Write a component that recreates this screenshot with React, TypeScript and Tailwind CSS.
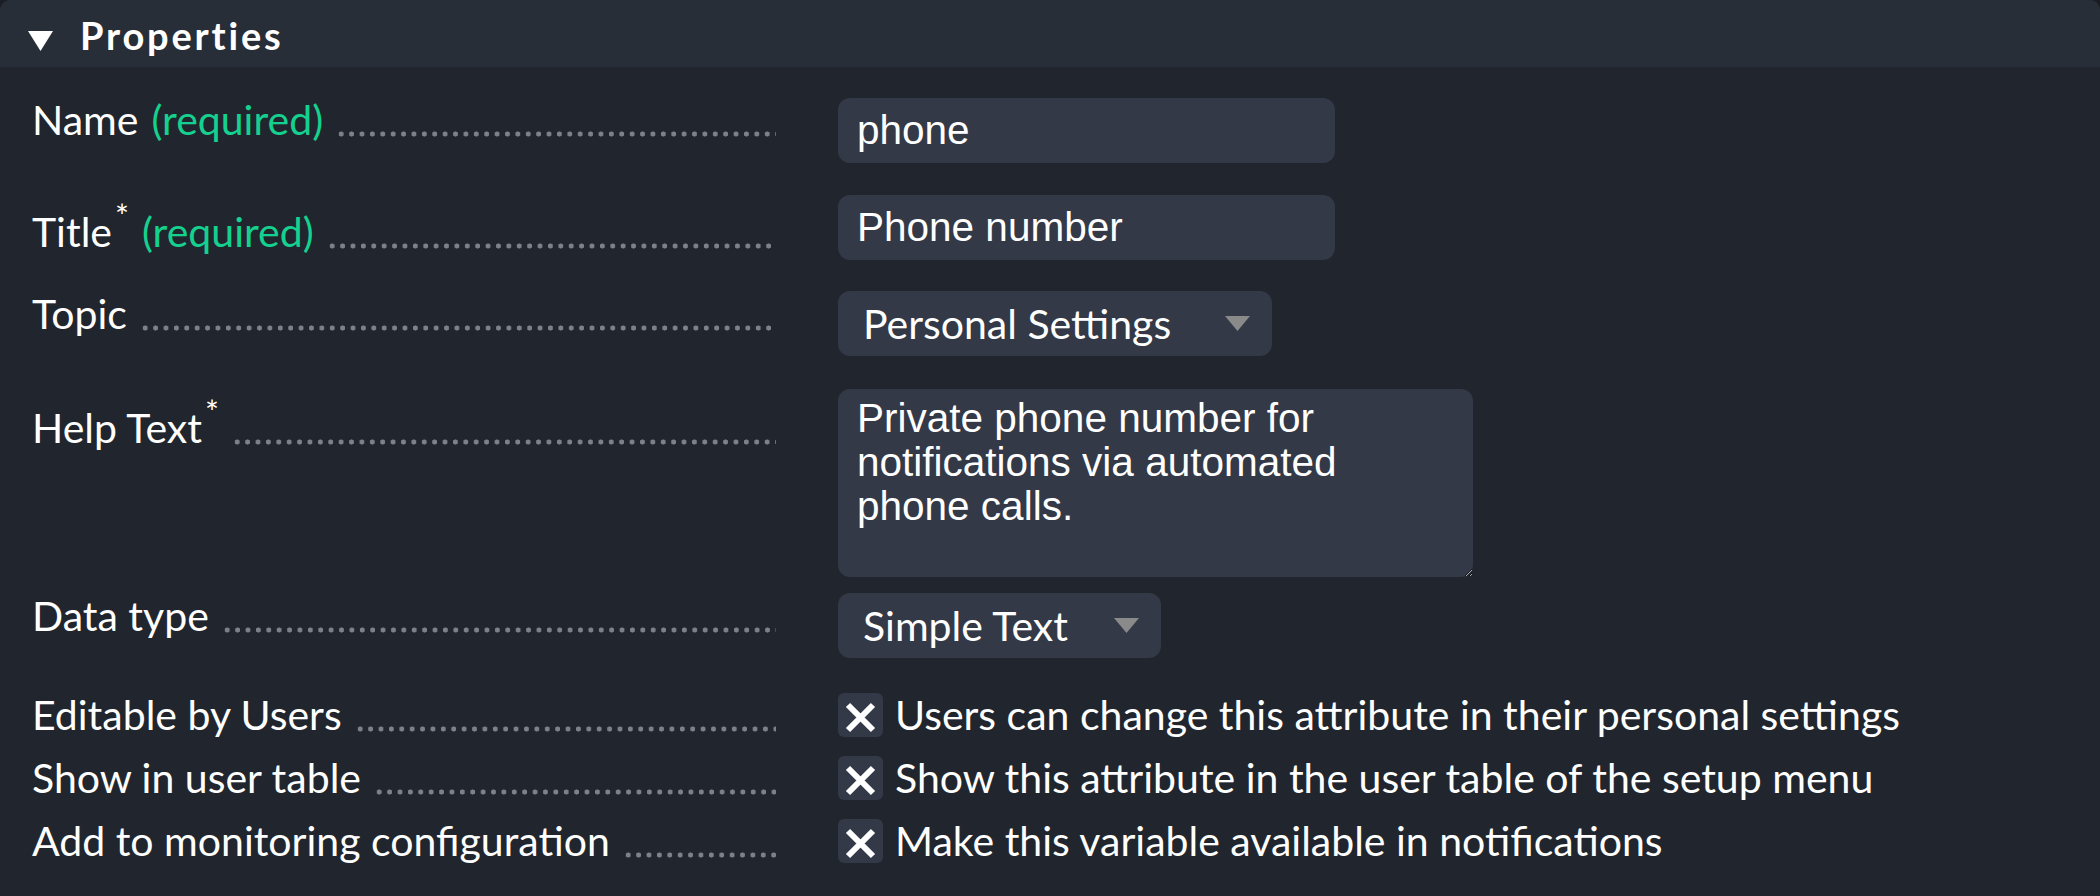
import React from 'react';

const LABEL_FONT = { fontFamily: 'Lato, "Noto Sans", sans-serif' };
const INPUT_FONT = { fontFamily: '"Liberation Sans", Arial, sans-serif' };

const Dots: React.FC = () => (
  <span className="flex-1 h-[6px] mt-[35px] ml-[13px] bg-[radial-gradient(circle,#7d828a_2.3px,transparent_2.8px)] bg-[length:10.4px_6px] bg-repeat-x" />
);

const Required: React.FC = () => <span className="ml-[13px] text-[#15d18f]">(required)</span>;

const Star: React.FC = () => (
  <span className="relative -top-[19px] ml-[3px] text-[33px] leading-none">*</span>
);

type LabelProps = { children: React.ReactNode; offset?: string };

const Label: React.FC<LabelProps> = ({ children, offset = '' }) => (
  <div className={`flex w-[744px] ml-[32px] ${offset}`}>
    <span className="whitespace-nowrap text-[41px] leading-[48px] text-white" style={LABEL_FONT}>
      {children}
    </span>
    <Dots />
  </div>
);

const TextInput: React.FC<{ value: string }> = ({ value }) => (
  <input
    readOnly
    value={value}
    className="w-[497px] h-[65px] rounded-[12px] bg-[#333947] pl-[19px] text-[40.5px] text-white outline-none"
    style={INPUT_FONT}
  />
);

const Select: React.FC<{ value: string; width: string }> = ({ value, width }) => (
  <div className={`flex h-[65px] ${width} items-center justify-between rounded-[12px] bg-[#333947] pl-[25px] pr-[22px]`}>
    <span className="text-[41px] text-white" style={LABEL_FONT}>
      {value}
    </span>
    <svg width="25" height="15" viewBox="0 0 25 15">
      <polygon points="0,0 25,0 12.5,15" fill="#8a8a8a" />
    </svg>
  </div>
);

const Check: React.FC<{ text: string }> = ({ text }) => (
  <div className="flex items-center">
    <div className="w-[45px] h-[44px] rounded-[6px] bg-[#333947]">
      <svg width="45" height="44" viewBox="0 0 45 44">
        <path d="M10 12 L35 37 M35 12 L10 37" stroke="#fff" strokeWidth="6" />
      </svg>
    </div>
    <span className="ml-[12px] whitespace-nowrap text-[41px] leading-[48px] text-white" style={LABEL_FONT}>
      {text}
    </span>
  </div>
);

const App: React.FC = () => {
  return (
    <div className="min-h-screen bg-[#1a1e24]">
      <div className="h-[896px] rounded-t-[10px] bg-[#21262e] overflow-hidden">
        {/* Section header */}
        <header className="flex h-[67px] items-start bg-[#282e38]">
          <svg className="mt-[31px] ml-[28px]" width="25" height="20" viewBox="0 0 25 20">
            <polygon points="0,0 25,0 12.5,20" fill="#fff" />
          </svg>
          <h2
            className="mt-[12px] ml-[27px] text-[38px] font-bold leading-[46px] tracking-[2.8px] text-white"
            style={LABEL_FONT}
          >
            Properties
          </h2>
        </header>

        {/* Rows */}
        <div className="flex flex-col">
          <div className="mt-[31px] flex items-start">
            <Label offset="-mt-[2px]">
              Name
              <Required />
            </Label>
            <div className="ml-[62px]">
              <TextInput value="phone" />
            </div>
          </div>

          <div className="mt-[32px] flex items-start">
            <Label offset="mt-[13px]">
              Title
              <Star />
              <Required />
            </Label>
            <div className="ml-[62px]">
              <TextInput value="Phone number" />
            </div>
          </div>

          <div className="mt-[31px] flex items-start">
            <Label offset="-mt-[1px]">Topic</Label>
            <div className="ml-[62px]">
              <Select value="Personal Settings" width="w-[434px]" />
            </div>
          </div>

          <div className="mt-[33px] flex items-start">
            <Label offset="mt-[15px]">
              Help Text
              <Star />
            </Label>
            <div className="ml-[62px]">
              <textarea
                readOnly
                value={'Private phone number for\nnotifications via automated\nphone calls.'}
                className="block w-[635px] h-[188px] rounded-[12px] bg-[#333947] pl-[19px] pt-[7px] text-[40.5px] leading-[44px] text-white outline-none"
                style={INPUT_FONT}
              />
            </div>
          </div>

          <div className="mt-[16px] flex items-start">
            <Label offset="-mt-[1px]">Data type</Label>
            <div className="ml-[62px]">
              <Select value="Simple Text" width="w-[323px]" />
            </div>
          </div>

          <div className="mt-[33px] flex items-center">
            <Label>Editable by Users</Label>
            <div className="ml-[62px]">
              <Check text="Users can change this attribute in their personal settings" />
            </div>
          </div>

          <div className="mt-[15px] flex items-center">
            <Label>Show in user table</Label>
            <div className="ml-[62px]">
              <Check text="Show this attribute in the user table of the setup menu" />
            </div>
          </div>

          <div className="mt-[15px] flex items-center">
            <Label>Add to monitoring configuration</Label>
            <div className="ml-[62px]">
              <Check text="Make this variable available in notifications" />
            </div>
          </div>
        </div>
      </div>
    </div>
  );
};

export default App;
